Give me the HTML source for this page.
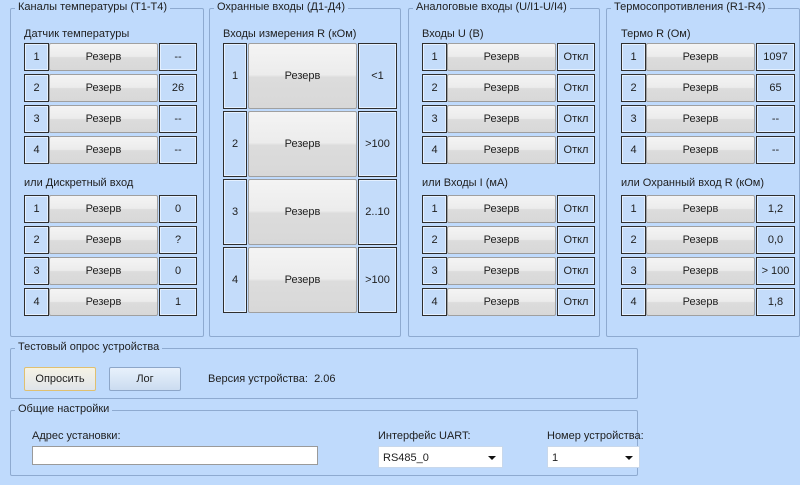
<!DOCTYPE html>
<html><head><meta charset="utf-8"><style>
*{box-sizing:border-box;margin:0;padding:0}
body{width:800px;height:485px;background:#bfdafc;font-family:"Liberation Sans","DejaVu Sans",sans-serif;font-size:11px;color:#1e1e1e;position:relative;overflow:hidden}
div{position:absolute}
.g{border:1px solid #8eaad0;border-radius:2px}
.t{background:#bfdafc;padding:0 3px;top:-8px;left:4px;white-space:nowrap;color:#1e1e1e}
.l{white-space:nowrap}
.n,.v{border:1px solid #2e2e2e;background:#c4dcfa;display:flex;align-items:center;justify-content:center;box-shadow:inset 0 0 0 1px #e4f0ff}
.b{border:1px solid #a0a0a0;border-radius:2px;background:linear-gradient(#f4f4f4 0%,#ececec 48%,#dcdcdc 52%,#d8d8d8 100%);display:flex;align-items:center;justify-content:center}
.btn{border:1px solid #8da6c8;border-radius:2px;background:linear-gradient(#e8f1fc,#cbdcf0);display:flex;align-items:center;justify-content:center}
.cb{background:#fff;border:1px solid #c8d8ec;padding:5px 0 0 4px}
.ar{position:absolute;right:6px;top:9px;width:0;height:0;border-left:4px solid transparent;border-right:4px solid transparent;border-top:4px solid #111}
</style></head><body>

<div class="g" style="left:10px;top:8px;width:194px;height:329px"><div class="t">Каналы температуры (Т1-Т4)</div></div>
<div class="g" style="left:209px;top:8px;width:192px;height:329px"><div class="t">Охранные входы (Д1-Д4)</div></div>
<div class="g" style="left:408px;top:8px;width:192px;height:329px"><div class="t">Аналоговые входы (U/I1-U/I4)</div></div>
<div class="g" style="left:606px;top:8px;width:194px;height:329px"><div class="t">Термосопротивления (R1-R4)</div></div>

<div class="l" style="left:24px;top:28px">Датчик температуры</div>
<div class="l" style="left:24px;top:177px">или Дискретный вход</div>
<div class="l" style="left:223px;top:28px">Входы измерения R (кОм)</div>
<div class="l" style="left:422px;top:28px">Входы U (В)</div>
<div class="l" style="left:422px;top:177px">или Входы I (мА)</div>
<div class="l" style="left:621px;top:28px">Термо R (Ом)</div>
<div class="l" style="left:621px;top:177px">или Охранный вход R (кОм)</div>

<!-- group 1 -->
<div class="n" style="left:24px;top:43px;width:25px;height:28px">1</div><div class="b" style="left:49px;top:43px;width:109px;height:28px">Резерв</div><div class="v" style="left:159px;top:43px;width:38px;height:28px">--</div>
<div class="n" style="left:24px;top:74px;width:25px;height:28px">2</div><div class="b" style="left:49px;top:74px;width:109px;height:28px">Резерв</div><div class="v" style="left:159px;top:74px;width:38px;height:28px">26</div>
<div class="n" style="left:24px;top:105px;width:25px;height:28px">3</div><div class="b" style="left:49px;top:105px;width:109px;height:28px">Резерв</div><div class="v" style="left:159px;top:105px;width:38px;height:28px">--</div>
<div class="n" style="left:24px;top:136px;width:25px;height:28px">4</div><div class="b" style="left:49px;top:136px;width:109px;height:28px">Резерв</div><div class="v" style="left:159px;top:136px;width:38px;height:28px">--</div>
<div class="n" style="left:24px;top:195px;width:25px;height:28px">1</div><div class="b" style="left:49px;top:195px;width:109px;height:28px">Резерв</div><div class="v" style="left:159px;top:195px;width:38px;height:28px">0</div>
<div class="n" style="left:24px;top:226px;width:25px;height:28px">2</div><div class="b" style="left:49px;top:226px;width:109px;height:28px">Резерв</div><div class="v" style="left:159px;top:226px;width:38px;height:28px">?</div>
<div class="n" style="left:24px;top:257px;width:25px;height:28px">3</div><div class="b" style="left:49px;top:257px;width:109px;height:28px">Резерв</div><div class="v" style="left:159px;top:257px;width:38px;height:28px">0</div>
<div class="n" style="left:24px;top:288px;width:25px;height:28px">4</div><div class="b" style="left:49px;top:288px;width:109px;height:28px">Резерв</div><div class="v" style="left:159px;top:288px;width:38px;height:28px">1</div>

<!-- group 2 -->
<div class="n" style="left:223px;top:43px;width:24px;height:66px">1</div><div class="b" style="left:248px;top:43px;width:109px;height:66px">Резерв</div><div class="v" style="left:358px;top:43px;width:39px;height:66px">&lt;1</div>
<div class="n" style="left:223px;top:111px;width:24px;height:66px">2</div><div class="b" style="left:248px;top:111px;width:109px;height:66px">Резерв</div><div class="v" style="left:358px;top:111px;width:39px;height:66px">&gt;100</div>
<div class="n" style="left:223px;top:179px;width:24px;height:66px">3</div><div class="b" style="left:248px;top:179px;width:109px;height:66px">Резерв</div><div class="v" style="left:358px;top:179px;width:39px;height:66px">2..10</div>
<div class="n" style="left:223px;top:247px;width:24px;height:66px">4</div><div class="b" style="left:248px;top:247px;width:109px;height:66px">Резерв</div><div class="v" style="left:358px;top:247px;width:39px;height:66px">&gt;100</div>

<!-- group 3 -->
<div class="n" style="left:422px;top:43px;width:25px;height:28px">1</div><div class="b" style="left:447px;top:43px;width:109px;height:28px">Резерв</div><div class="v" style="left:557px;top:43px;width:38px;height:28px">Откл</div>
<div class="n" style="left:422px;top:74px;width:25px;height:28px">2</div><div class="b" style="left:447px;top:74px;width:109px;height:28px">Резерв</div><div class="v" style="left:557px;top:74px;width:38px;height:28px">Откл</div>
<div class="n" style="left:422px;top:105px;width:25px;height:28px">3</div><div class="b" style="left:447px;top:105px;width:109px;height:28px">Резерв</div><div class="v" style="left:557px;top:105px;width:38px;height:28px">Откл</div>
<div class="n" style="left:422px;top:136px;width:25px;height:28px">4</div><div class="b" style="left:447px;top:136px;width:109px;height:28px">Резерв</div><div class="v" style="left:557px;top:136px;width:38px;height:28px">Откл</div>
<div class="n" style="left:422px;top:195px;width:25px;height:28px">1</div><div class="b" style="left:447px;top:195px;width:109px;height:28px">Резерв</div><div class="v" style="left:557px;top:195px;width:38px;height:28px">Откл</div>
<div class="n" style="left:422px;top:226px;width:25px;height:28px">2</div><div class="b" style="left:447px;top:226px;width:109px;height:28px">Резерв</div><div class="v" style="left:557px;top:226px;width:38px;height:28px">Откл</div>
<div class="n" style="left:422px;top:257px;width:25px;height:28px">3</div><div class="b" style="left:447px;top:257px;width:109px;height:28px">Резерв</div><div class="v" style="left:557px;top:257px;width:38px;height:28px">Откл</div>
<div class="n" style="left:422px;top:288px;width:25px;height:28px">4</div><div class="b" style="left:447px;top:288px;width:109px;height:28px">Резерв</div><div class="v" style="left:557px;top:288px;width:38px;height:28px">Откл</div>

<!-- group 4 -->
<div class="n" style="left:621px;top:43px;width:25px;height:28px">1</div><div class="b" style="left:646px;top:43px;width:109px;height:28px">Резерв</div><div class="v" style="left:756px;top:43px;width:39px;height:28px">1097</div>
<div class="n" style="left:621px;top:74px;width:25px;height:28px">2</div><div class="b" style="left:646px;top:74px;width:109px;height:28px">Резерв</div><div class="v" style="left:756px;top:74px;width:39px;height:28px">65</div>
<div class="n" style="left:621px;top:105px;width:25px;height:28px">3</div><div class="b" style="left:646px;top:105px;width:109px;height:28px">Резерв</div><div class="v" style="left:756px;top:105px;width:39px;height:28px">--</div>
<div class="n" style="left:621px;top:136px;width:25px;height:28px">4</div><div class="b" style="left:646px;top:136px;width:109px;height:28px">Резерв</div><div class="v" style="left:756px;top:136px;width:39px;height:28px">--</div>
<div class="n" style="left:621px;top:195px;width:25px;height:28px">1</div><div class="b" style="left:646px;top:195px;width:109px;height:28px">Резерв</div><div class="v" style="left:756px;top:195px;width:39px;height:28px">1,2</div>
<div class="n" style="left:621px;top:226px;width:25px;height:28px">2</div><div class="b" style="left:646px;top:226px;width:109px;height:28px">Резерв</div><div class="v" style="left:756px;top:226px;width:39px;height:28px">0,0</div>
<div class="n" style="left:621px;top:257px;width:25px;height:28px">3</div><div class="b" style="left:646px;top:257px;width:109px;height:28px">Резерв</div><div class="v" style="left:756px;top:257px;width:39px;height:28px">&gt; 100</div>
<div class="n" style="left:621px;top:288px;width:25px;height:28px">4</div><div class="b" style="left:646px;top:288px;width:109px;height:28px">Резерв</div><div class="v" style="left:756px;top:288px;width:39px;height:28px">1,8</div>

<!-- test -->
<div class="g" style="left:10px;top:348px;width:628px;height:51px"><div class="t">Тестовый опрос устройства</div></div>
<div class="btn" style="left:24px;top:367px;width:72px;height:24px;border-color:#e0c070;background:linear-gradient(#f6f3e4,#dfe4ea)">Опросить</div>
<div class="btn" style="left:109px;top:367px;width:72px;height:24px">Лог</div>
<div class="l" style="left:208px;top:373px">Версия устройства:&nbsp; 2.06</div>

<!-- settings -->
<div class="g" style="left:10px;top:410px;width:628px;height:66px"><div class="t">Общие настройки</div></div>
<div class="l" style="left:32px;top:430px">Адрес установки:</div>
<div style="left:32px;top:446px;width:286px;height:19px;background:#fff;border:1px solid #9a9a9a"></div>
<div class="l" style="left:378px;top:430px">Интерфейс UART:</div>
<div class="cb" style="left:378px;top:446px;width:125px;height:22px">RS485_0<span class="ar"></span></div>
<div class="l" style="left:547px;top:430px">Номер устройства:</div>
<div class="cb" style="left:547px;top:446px;width:93px;height:22px">1<span class="ar"></span></div>

</body></html>
